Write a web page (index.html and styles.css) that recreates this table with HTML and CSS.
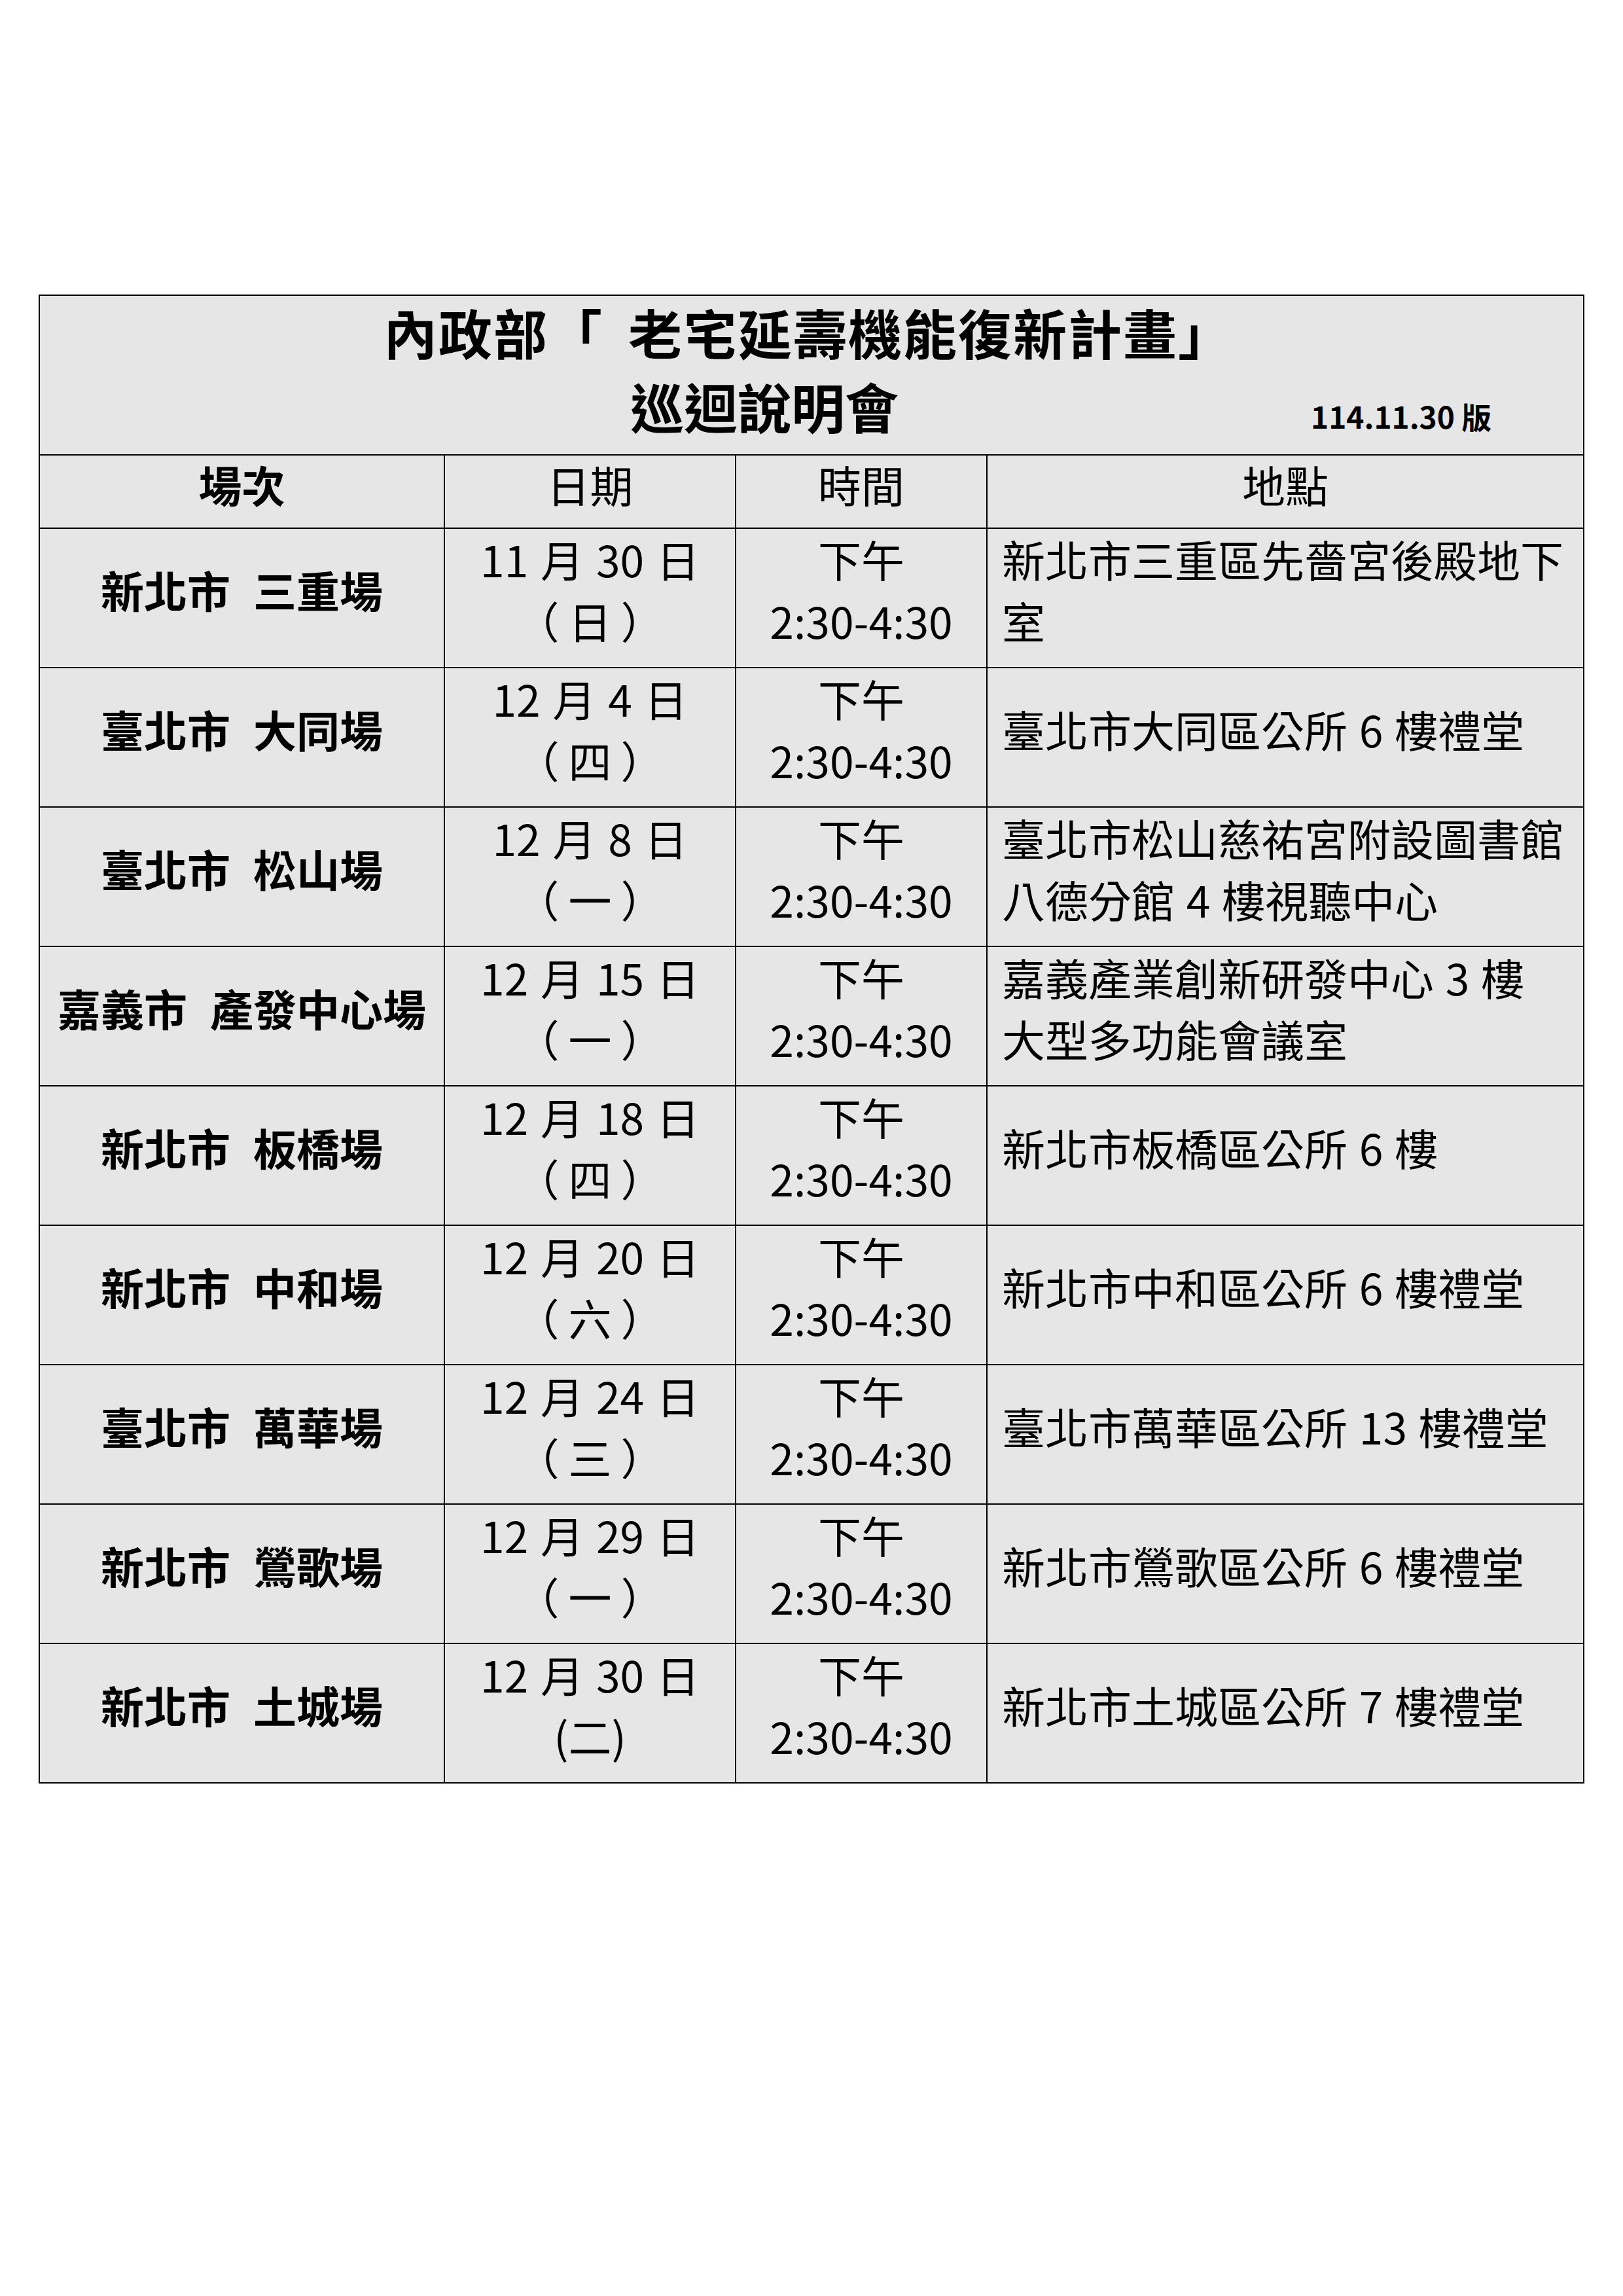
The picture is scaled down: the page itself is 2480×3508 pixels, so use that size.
FILE: index.html
```html
<!DOCTYPE html>
<html lang="zh-Hant">
<head>
<meta charset="utf-8">
<title>內政部「老宅延壽機能復新計畫」巡迴說明會</title>
<link rel="stylesheet" href="styles.css">
</head>
<body>
<div class="sheet">
  <div class="title">
    <div class="title-line1">內政部「<span class="gap"></span>老宅延壽機能復新計畫」</div>
    <div class="title-line2"><span class="title-sub">巡迴說明會</span><span class="version">114.11.30 版</span></div>
  </div>
  <div class="grid">
    <div class="cell head bold">場次</div>
    <div class="cell head">日期</div>
    <div class="cell head">時間</div>
    <div class="cell head last">地點</div>

    <div class="cell venue bold">新北市 三重場</div>
    <div class="cell"><span class="date">11 月 30 日</span><span class="day">（日）</span></div>
    <div class="cell"><span>下午</span><span>2:30-4:30</span></div>
    <div class="cell place last">新北市三重區先嗇宮後殿地下<br>室</div>

    <div class="cell venue bold">臺北市 大同場</div>
    <div class="cell"><span class="date">12 月 4 日</span><span class="day">（四）</span></div>
    <div class="cell"><span>下午</span><span>2:30-4:30</span></div>
    <div class="cell place last">臺北市大同區公所 6 樓禮堂</div>

    <div class="cell venue bold">臺北市 松山場</div>
    <div class="cell"><span class="date">12 月 8 日</span><span class="day">（一）</span></div>
    <div class="cell"><span>下午</span><span>2:30-4:30</span></div>
    <div class="cell place last">臺北市松山慈祐宮附設圖書館<br>八德分館 4 樓視聽中心</div>

    <div class="cell venue bold">嘉義市 產發中心場</div>
    <div class="cell"><span class="date">12 月 15 日</span><span class="day">（一）</span></div>
    <div class="cell"><span>下午</span><span>2:30-4:30</span></div>
    <div class="cell place last">嘉義產業創新研發中心 3 樓<br>大型多功能會議室</div>

    <div class="cell venue bold">新北市 板橋場</div>
    <div class="cell"><span class="date">12 月 18 日</span><span class="day">（四）</span></div>
    <div class="cell"><span>下午</span><span>2:30-4:30</span></div>
    <div class="cell place last">新北市板橋區公所 6 樓</div>

    <div class="cell venue bold">新北市 中和場</div>
    <div class="cell"><span class="date">12 月 20 日</span><span class="day">（六）</span></div>
    <div class="cell"><span>下午</span><span>2:30-4:30</span></div>
    <div class="cell place last">新北市中和區公所 6 樓禮堂</div>

    <div class="cell venue bold">臺北市 萬華場</div>
    <div class="cell"><span class="date">12 月 24 日</span><span class="day">（三）</span></div>
    <div class="cell"><span>下午</span><span>2:30-4:30</span></div>
    <div class="cell place last">臺北市萬華區公所 13 樓禮堂</div>

    <div class="cell venue bold">新北市 鶯歌場</div>
    <div class="cell"><span class="date">12 月 29 日</span><span class="day">（一）</span></div>
    <div class="cell"><span>下午</span><span>2:30-4:30</span></div>
    <div class="cell place last">新北市鶯歌區公所 6 樓禮堂</div>

    <div class="cell venue bold">新北市 土城場</div>
    <div class="cell"><span class="date">12 月 30 日</span><span>(二)</span></div>
    <div class="cell"><span>下午</span><span>2:30-4:30</span></div>
    <div class="cell place last">新北市土城區公所 7 樓禮堂</div>
  </div>
</div>
</body>
</html>
```
FILE: styles.css
```css
html, body {
  margin: 0;
  padding: 0;
  background: #ffffff;
}

body {
  width: 2480px;
  height: 3508px;
  font-family: "Noto Sans CJK TC", "Noto Sans", sans-serif;
  color: #000000;
}

.sheet {
  box-sizing: border-box;
  width: 2362px;
  margin: 450px 0 0 59px;
  border-top: 2px solid #000;
  border-left: 2px solid #000;
  border-right: 2px solid #000;
  background: #e7e6e6;
}

.title {
  box-sizing: border-box;
  height: 244px;
  border-bottom: 2px solid #000;
  display: flex;
  flex-direction: column;
  justify-content: center;
  padding-bottom: 4px;
  font-size: 82px;
  font-weight: 700;
  line-height: 113px;
}

.title-line1 {
  text-align: center;
  padding-right: 10px;
  letter-spacing: 2px;
  white-space: nowrap;
}

.gap {
  display: inline-block;
  width: 38px;
}

.title-line2 {
  padding-left: 902px;
  white-space: nowrap;
}

.version {
  font-size: 46px;
  margin-left: 630px;
}

.grid {
  display: grid;
  grid-template-columns: 619px 445px 384px 910px;
  grid-template-rows: 112px repeat(9, 213px);
}

.cell {
  box-sizing: border-box;
  border-right: 2px solid #000;
  border-bottom: 2px solid #000;
  display: flex;
  flex-direction: column;
  justify-content: center;
  align-items: center;
  text-align: center;
  padding-bottom: 28px;
  font-size: 66px;
  line-height: 94px;
  white-space: nowrap;
}

.cell.last {
  border-right: none;
}

.head {
  padding-bottom: 24px;
}

.bold {
  font-weight: 700;
}

.venue {
  word-spacing: 20px;
}

.date {
  word-spacing: 4px;
}

.day {
  letter-spacing: 14px;
  padding-left: 14px;
}

.place {
  align-items: flex-start;
  text-align: left;
  padding-left: 22px;
  padding-right: 8px;
  word-spacing: 3px;
}
```
